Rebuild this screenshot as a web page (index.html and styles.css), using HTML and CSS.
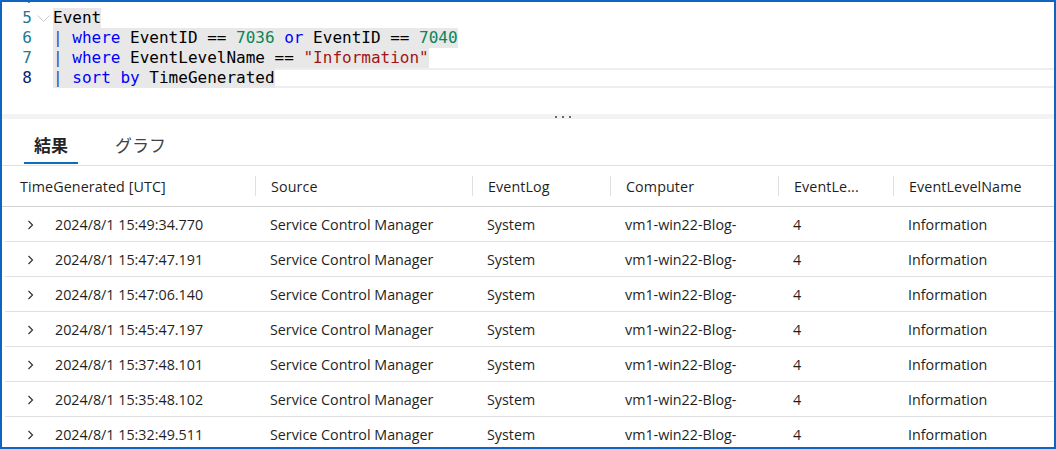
FILE: index.html
```html
<!DOCTYPE html>
<html lang="ja">
<head>
<meta charset="utf-8">
<title>Log query</title>
<link rel="stylesheet" href="styles.css">
</head>
<body>
<div class="frame">
  <div class="editor">
    <div class="lines">
      <div class="line"><span class="ln">4</span><span class="fold"></span><span class="code"></span></div>
      <div class="line"><span class="ln">5</span><span class="fold"><svg width="13" height="7" viewBox="0 0 13 7"><polyline points="0.5,0.5 6.5,6.5 12.5,0.5" fill="none" stroke="#c8c8c8" stroke-width="1"/></svg></span><span class="code"><span class="sel">Event</span></span></div>
      <div class="line"><span class="ln">6</span><span class="fold"></span><span class="code"><span class="sel"><span class="pipe">|</span> <span class="kw">where</span> EventID == <span class="num">7036</span> <span class="kw">or</span> EventID == <span class="num">7040</span></span></span></div>
      <div class="line"><span class="ln">7</span><span class="fold"></span><span class="code"><span class="sel"><span class="pipe">|</span> <span class="kw">where</span> EventLevelName == <span class="str">"Information"</span></span></span></div>
      <div class="line current"><span class="ln active">8</span><span class="fold"></span><span class="code"><span class="sel"><span class="pipe">|</span> <span class="kw">sort by</span> TimeGenerated</span></span></div>
    </div>
  </div>
  <div class="splitter"><span class="dots"><i></i><i></i><i></i></span></div>
  <div class="tabs">
    <div class="tab active">結果</div>
    <div class="tab">グラフ</div>
  </div>
  <div class="table">
    <div class="thead">
      <div class="th">TimeGenerated [UTC]</div>
      <div class="th">Source</div>
      <div class="th">EventLog</div>
      <div class="th">Computer</div>
      <div class="th">EventLe...</div>
      <div class="th">EventLevelName</div>
    </div>
    <div class="row"><div class="td first"><svg class="chev" width="7" height="10" viewBox="0 0 7 10"><polyline points="1.5,1 5.5,5 1.5,9" fill="none" stroke="#333" stroke-width="1.2"/></svg>2024/8/1 15:49:34.770</div><div class="td">Service Control Manager</div><div class="td">System</div><div class="td">vm1-win22-Blog-</div><div class="td">4</div><div class="td">Information</div></div>
    <div class="row"><div class="td first"><svg class="chev" width="7" height="10" viewBox="0 0 7 10"><polyline points="1.5,1 5.5,5 1.5,9" fill="none" stroke="#333" stroke-width="1.2"/></svg>2024/8/1 15:47:47.191</div><div class="td">Service Control Manager</div><div class="td">System</div><div class="td">vm1-win22-Blog-</div><div class="td">4</div><div class="td">Information</div></div>
    <div class="row"><div class="td first"><svg class="chev" width="7" height="10" viewBox="0 0 7 10"><polyline points="1.5,1 5.5,5 1.5,9" fill="none" stroke="#333" stroke-width="1.2"/></svg>2024/8/1 15:47:06.140</div><div class="td">Service Control Manager</div><div class="td">System</div><div class="td">vm1-win22-Blog-</div><div class="td">4</div><div class="td">Information</div></div>
    <div class="row"><div class="td first"><svg class="chev" width="7" height="10" viewBox="0 0 7 10"><polyline points="1.5,1 5.5,5 1.5,9" fill="none" stroke="#333" stroke-width="1.2"/></svg>2024/8/1 15:45:47.197</div><div class="td">Service Control Manager</div><div class="td">System</div><div class="td">vm1-win22-Blog-</div><div class="td">4</div><div class="td">Information</div></div>
    <div class="row"><div class="td first"><svg class="chev" width="7" height="10" viewBox="0 0 7 10"><polyline points="1.5,1 5.5,5 1.5,9" fill="none" stroke="#333" stroke-width="1.2"/></svg>2024/8/1 15:37:48.101</div><div class="td">Service Control Manager</div><div class="td">System</div><div class="td">vm1-win22-Blog-</div><div class="td">4</div><div class="td">Information</div></div>
    <div class="row"><div class="td first"><svg class="chev" width="7" height="10" viewBox="0 0 7 10"><polyline points="1.5,1 5.5,5 1.5,9" fill="none" stroke="#333" stroke-width="1.2"/></svg>2024/8/1 15:35:48.102</div><div class="td">Service Control Manager</div><div class="td">System</div><div class="td">vm1-win22-Blog-</div><div class="td">4</div><div class="td">Information</div></div>
    <div class="row"><div class="td first"><svg class="chev" width="7" height="10" viewBox="0 0 7 10"><polyline points="1.5,1 5.5,5 1.5,9" fill="none" stroke="#333" stroke-width="1.2"/></svg>2024/8/1 15:32:49.511</div><div class="td">Service Control Manager</div><div class="td">System</div><div class="td">vm1-win22-Blog-</div><div class="td">4</div><div class="td">Information</div></div>
  </div>
</div>
</body>
</html>
```
FILE: styles.css
```css
html, body {
  margin: 0;
  padding: 0;
  background: #fff;
}
body {
  font-family: "Open Sans", "Noto Sans", sans-serif;
}
.frame {
  width: 1056px;
  height: 449px;
  box-sizing: border-box;
  border: 2px solid #0f64c3;
  overflow: hidden;
  background: #fff;
  display: flex;
  flex-direction: column;
}
.editor {
  height: 112px;
  flex: none;
  overflow: hidden;
  font-family: "DejaVu Sans Mono", monospace;
  font-size: 16px;
  color: #000;
}
.lines {
  margin-top: -14px;
}
.line {
  display: flex;
  height: 20px;
  line-height: 20px;
}
.ln {
  width: 30px;
  flex: none;
  text-align: right;
  color: #237893;
}
.ln.active {
  color: #0b216f;
}
.fold {
  width: 21px;
  flex: none;
  display: flex;
  align-items: center;
  justify-content: center;
  padding-left: 2px;
  box-sizing: border-box;
}
.code {
  flex: 1;
  display: flex;
  white-space: pre;
}
.line.current .code {
  background:
    linear-gradient(#eeeeee, #eeeeee) top left / 100% 2px no-repeat,
    linear-gradient(#eeeeee, #eeeeee) bottom left / 100% 2px no-repeat;
}
.sel {
  background: #e8e8e8;
  white-space: pre;
  height: 20px;
}
.kw { color: #0000ff; }
.pipe { color: #3444c8; }
.num { color: #098658; }
.str { color: #a31515; }

.splitter {
  height: 5px;
  flex: none;
  background: #f3f3f3;
  display: flex;
  align-items: center;
}
.dots {
  margin-left: 553px;
  display: flex;
  gap: 5px;
}
.dots i {
  width: 2px;
  height: 2px;
  background: #6b6b6b;
  display: block;
}

.tabs {
  height: 46px;
  flex: none;
  box-sizing: content-box;
  border-bottom: 1px solid #e0e0e0;
  display: flex;
  align-items: flex-end;
  padding-left: 22px;
  gap: 27px;
}
.tab {
  font-family: "Noto Sans CJK JP", sans-serif;
  font-size: 17px;
  line-height: 24px;
  padding: 0 10px 5px;
  margin-bottom: 1px;
  border-bottom: 2px solid transparent;
  color: #424242;
}
.tab.active {
  font-weight: 700;
  color: #242424;
  border-bottom-color: #0f6cbd;
}

.table {
  flex: 1;
  overflow: hidden;
  font-size: 14.3px;
  color: #1f1f1f;
}
.thead {
  display: grid;
  grid-template-columns: 250px 217px 138px 168px 115px 1fr;
  height: 40px;
  border-bottom: 1px solid #d1d1d1;
  padding-left: 3px;
}
.th {
  display: flex;
  align-items: center;
  white-space: nowrap;
  overflow: hidden;
  letter-spacing: 0.1px;
}
.th:first-child {
  padding-left: 15px;
}
.th + .th::before {
  content: "";
  width: 1px;
  height: 20px;
  background: #e0e0e0;
  margin-right: 15px;
  flex: none;
}
.row {
  display: grid;
  grid-template-columns: 250px 217px 138px 168px 115px 1fr;
  height: 35px;
  box-sizing: border-box;
  border-bottom: 1px solid #e0e0e0;
  margin-left: 3px;
  align-items: center;
}
.td {
  padding-left: 15px;
  white-space: nowrap;
  overflow: hidden;
}
.td.first {
  padding-left: 22px;
  display: flex;
  align-items: center;
}
.chev {
  flex: none;
  margin-right: 21px;
  margin-top: 1px;
}
```
